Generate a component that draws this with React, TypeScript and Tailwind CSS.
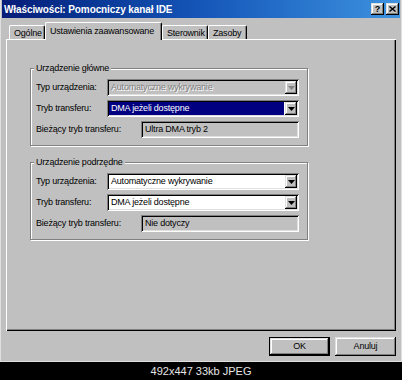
import React from 'react';

// Win9x-style bevels
const raised =
  'shadow-[inset_-1px_-1px_0_#000,inset_1px_1px_0_#dfdfdf,inset_-2px_-2px_0_#808080,inset_2px_2px_0_#fff]';
const sunken =
  'shadow-[inset_1px_1px_0_#808080,inset_-1px_-1px_0_#fff,inset_2px_2px_0_#000,inset_-2px_-2px_0_#dfdfdf]';

type Variant = 'disabled' | 'selected' | 'normal';

const Arrow: React.FC<{ disabled?: boolean }> = ({ disabled }) => (
  <div className={`w-[12px] h-[13px] shrink-0 bg-[#c0c0c0] flex items-center justify-center ${raised}`}>
    <svg width="7" height="4" viewBox="0 0 7 4">
      <path d="M0 0h7L3.5 4z" fill={disabled ? '#808080' : '#000'} />
    </svg>
  </div>
);

const Combo: React.FC<{ value: string; variant: Variant }> = ({ value, variant }) => (
  <div
    className={`w-[192px] h-[17px] p-[2px] flex ${variant === 'disabled' ? 'bg-[#c0c0c0]' : 'bg-white'} ${sunken}`}
  >
    <span
      className={`flex-1 flex items-center pl-[2px] mr-[1px] ${
        variant === 'selected'
          ? 'bg-[#000080] text-white'
          : variant === 'disabled'
          ? 'text-[#808080] [text-shadow:1px_1px_0_#fff]'
          : 'text-black'
      }`}
    >
      {value}
    </span>
    <Arrow disabled={variant === 'disabled'} />
  </div>
);

const ReadOnly: React.FC<{ value: string }> = ({ value }) => (
  <div className={`w-[158px] h-[17px] px-[4px] flex items-center bg-[#c0c0c0] ${sunken}`}>{value}</div>
);

const Group: React.FC<{
  title: string;
  typ: string;
  typVariant: Variant;
  tryb: string;
  trybVariant: Variant;
  current: string;
  className?: string;
}> = ({ title, typ, typVariant, tryb, trybVariant, current, className }) => (
  <fieldset
    className={`w-[278px] border border-[#808080] shadow-[inset_1px_1px_0_#fff,1px_1px_0_#fff] pt-[6px] pb-[7px] ${className ?? ''}`}
  >
    <legend className="ml-[3px] px-[2px] leading-[10px] bg-[#c0c0c0]">{title}</legend>
    <div className="flex flex-col gap-[4px] pl-[5px] pr-[8px]">
      <div className="flex items-center">
        <span className="w-[71px]">Typ urządzenia:</span>
        <Combo value={typ} variant={typVariant} />
      </div>
      <div className="flex items-center">
        <span className="w-[71px]">Tryb transferu:</span>
        <Combo value={tryb} variant={trybVariant} />
      </div>
      <div className="flex items-center">
        <span className="w-[105px]">Bieżący tryb transferu:</span>
        <ReadOnly value={current} />
      </div>
    </div>
  </fieldset>
);

const tabs = ['Ogólne', 'Ustawienia zaawansowane', 'Sterownik', 'Zasoby'];
const tabWidths = ['w-[36px]', 'w-[117px]', 'w-[46px]', 'w-[39px]'];

const App: React.FC = () => {
  return (
    <div className="w-[402px] h-[380px] bg-black font-['Liberation_Sans',Arial,sans-serif] text-[9px] tracking-[-0.2px] text-black">
      {/* Dialog window */}
      <div className="h-[362px] bg-[#c0c0c0] border-x border-b border-[#dfdfdf] px-[1px] pb-[1px] flex flex-col">
        {/* Title bar */}
        <div className="h-[18px] shrink-0 pl-[2px] pr-[1px] flex items-center justify-between bg-linear-to-r from-[#061c78] via-[#1556b8] to-[#3e92e0]">
          <span className="text-white font-bold text-[10px] tracking-[-0.1px]">Właściwości: Pomocniczy kanał IDE</span>
          <div className="flex gap-[2px]">
            <div className={`w-[13px] h-[12px] bg-[#c0c0c0] flex items-center justify-center text-[9px] font-bold leading-none ${raised}`}>
              ?
            </div>
            <div className={`w-[13px] h-[12px] bg-[#c0c0c0] flex items-center justify-center ${raised}`}>
              <svg width="7" height="6" viewBox="0 0 7 6">
                <path d="M0.5 0.5l6 5M6.5 0.5l-6 5" stroke="#000" strokeWidth="1.4" />
              </svg>
            </div>
          </div>
        </div>

        <div className="flex-1 flex flex-col px-[4px]">
          {/* Tabs */}
          <div className="h-[17px] mt-[4px] pl-[3px] flex items-end">
            {tabs.map((t, i) =>
              i === 1 ? (
                <div
                  key={t}
                  className={`${tabWidths[i]} h-[18px] -mb-[1px] relative z-10 bg-[#c0c0c0] border-l border-t border-white rounded-t-[2px] shadow-[inset_-1px_0_0_#808080] border-r border-r-black pl-[4px] pt-[2px]`}
                >
                  {t}
                </div>
              ) : (
                <div
                  key={t}
                  className={`${tabWidths[i]} h-[14px] bg-[#c0c0c0] border-l border-t border-white rounded-t-[2px] shadow-[inset_-1px_0_0_#808080] border-r border-r-black pl-[4px] pt-[1px]`}
                >
                  {t}
                </div>
              )
            )}
          </div>

          {/* Tab panel */}
          <div className="h-[292px] pt-[24px] pl-[24px] shadow-[inset_1px_1px_0_#fff,inset_-1px_-1px_0_#000,inset_-2px_-2px_0_#808080]">
            <Group
              title="Urządzenie główne"
              typ="Automatyczne wykrywanie"
              typVariant="disabled"
              tryb="DMA jeżeli dostępne"
              trybVariant="selected"
              current="Ultra DMA tryb 2"
            />
            <Group
              className="mt-[11px]"
              title="Urządzenie podrzędne"
              typ="Automatyczne wykrywanie"
              typVariant="normal"
              tryb="DMA jeżeli dostępne"
              trybVariant="normal"
              current="Nie dotyczy"
            />
          </div>

          {/* Buttons */}
          <div className="mt-[6px] flex justify-end gap-[5px]">
            <button className="w-[61px] h-[19px] bg-[#c0c0c0] border border-black">
              <div className={`w-full h-full flex items-center justify-center ${raised}`}>OK</div>
            </button>
            <button className={`w-[61px] h-[19px] bg-[#c0c0c0] flex items-center justify-center ${raised}`}>
              Anuluj
            </button>
          </div>
        </div>
      </div>

      {/* Caption strip */}
      <div className="h-[18px] flex items-center justify-center text-[11px] tracking-normal text-[#e6e6e6]">
        492x447 33kb JPEG
      </div>
    </div>
  );
};

export default App;
